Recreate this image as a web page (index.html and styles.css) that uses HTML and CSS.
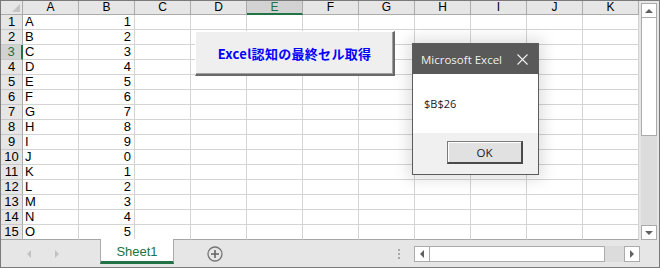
FILE: index.html
```html
<!DOCTYPE html>
<html lang="ja">
<head>
  <meta charset="UTF-8">
  <title>Excel認知の最終セル取得</title>
  <link rel="stylesheet" href="styles.css">
</head>
<body>
  <div class="window">
    <div class="main">
      <!-- Grid: filled by the script below -->
      <div class="sheet" id="sheet"></div>

      <div class="vscroll">
        <div class="sb-btn"><span class="tri up"></span></div>
        <div class="v-thumb"></div>
        <div class="v-track"></div>
        <div class="sb-btn"><span class="tri down"></span></div>
      </div>
    </div>

    <div class="tabbar">
      <div class="sheet-nav">
        <span class="nav-tri left"></span>
        <span class="nav-tri right"></span>
      </div>
      <div class="tab">Sheet1</div>
      <div class="add-sheet">
        <svg width="16" height="16" viewBox="0 0 16 16">
          <circle cx="8" cy="8" r="7" fill="none" stroke="#777" stroke-width="1.3"/>
          <path d="M8 4v8M4 8h8" stroke="#666" stroke-width="1.6"/>
        </svg>
      </div>
      <div class="spacer"></div>
      <div class="split-dots"><i></i><i></i><i></i></div>
      <div class="hscroll">
        <div class="sb-btn"><span class="tri left"></span></div>
        <div class="h-thumb"></div>
        <div class="h-track"></div>
        <div class="sb-btn"><span class="tri right"></span></div>
      </div>
    </div>

    <!-- Form button placed on the sheet -->
    <button class="macro-btn">Excel認知の最終セル取得</button>

    <!-- MsgBox -->
    <div class="dialog">
      <div class="dialog-title">
        <span>Microsoft Excel</span>
        <svg class="close" width="11" height="11" viewBox="0 0 11 11">
          <path d="M0.5 0.5l10 10M10.5 0.5l-10 10" stroke="#f2f2f2" stroke-width="1.1"/>
        </svg>
      </div>
      <div class="dialog-body">$B$26</div>
      <div class="dialog-foot">
        <button class="ok-btn">OK</button>
      </div>
    </div>
  </div>

  <script>
    // Build the sheet: header row + 15 data rows
    const cols = ['A', 'B', 'C', 'D', 'E', 'F', 'G', 'H', 'I', 'J', 'K'];
    const letters = 'ABCDEFGHIJKLMNO';
    const numbers = [1, 2, 3, 4, 5, 6, 7, 8, 9, 0, 1, 2, 3, 4, 5];
    const sheet = document.getElementById('sheet');

    let html = '<div class="row head"><div class="cell corner"><span class="corner-tri"></span></div>';
    cols.forEach(c => {
      html += '<div class="cell col-head' + (c === 'E' ? ' selected' : '') + '">' + c + '</div>';
    });
    html += '</div>';

    for (let i = 0; i < 15; i++) {
      html += '<div class="row">';
      html += '<div class="cell row-head' + (i === 2 ? ' selected' : '') + '">' + (i + 1) + '</div>';
      html += '<div class="cell">' + letters[i] + '</div>';
      html += '<div class="cell num">' + numbers[i] + '</div>';
      for (let j = 2; j < cols.length; j++) html += '<div class="cell"></div>';
      html += '</div>';
    }
    sheet.innerHTML = html;
  </script>
</body>
</html>
```

FILE: styles.css
```css
body {
  margin: 0;
  font-family: "Liberation Sans", Arial, sans-serif;
}

.window {
  position: relative;
  width: 660px;
  height: 268px;
  box-sizing: border-box;
  border: 1px solid #7a7a7a;
  background-color: #e6e6e6;
  overflow: hidden;
}

.main {
  display: flex;
  height: 239px;
}

/* Sheet grid */
.sheet {
  width: 638px;
  background-color: #fff;
}

.row {
  display: grid;
  grid-template-columns: 22px repeat(11, 56px);
  height: 15px;
}

.row.head {
  height: 14px;
}

.cell {
  box-sizing: border-box;
  border-right: 1px solid #d4d4d4;
  border-bottom: 1px solid #d4d4d4;
  font-size: 13px;
  line-height: 14px;
  padding-left: 2px;
  color: #000;
  white-space: nowrap;
  overflow: hidden;
}

.cell.num {
  text-align: right;
  padding-left: 0;
  padding-right: 3px;
}

.row:last-child .cell {
  border-bottom-color: #a6a6a6;
}

.col-head,
.row-head,
.corner {
  background-color: #e6e6e6;
  text-align: center;
  padding-left: 0;
  border-right-color: #ababab;
  border-bottom-color: #ababab;
}

.col-head {
  font-size: 12px;
  line-height: 13px;
  overflow: visible;
}

.row-head {
  border-bottom-color: #c8c8c8;
}

.col-head.selected {
  background-color: #d2d2d2;
  color: #217346;
  border-bottom: 2px solid #217346;
  line-height: 12px;
}

.row-head.selected {
  background-color: #d2d2d2;
  color: #217346;
  border-right: 2px solid #217346;
}

.corner {
  position: relative;
}

.corner-tri {
  position: absolute;
  right: 2px;
  bottom: 2px;
  width: 0;
  height: 0;
  border-left: 8px solid transparent;
  border-bottom: 8px solid #c4c4c4;
}

/* Scrollbars */
.vscroll {
  width: 20px;
  box-sizing: border-box;
  padding: 2px 2px 0 2px;
  display: flex;
  flex-direction: column;
}

.sb-btn {
  box-sizing: border-box;
  width: 16px;
  height: 15px;
  border: 1px solid #ababab;
  background-color: #fff;
  display: flex;
  align-items: center;
  justify-content: center;
  flex-shrink: 0;
}

.v-thumb {
  height: 118px;
  box-sizing: border-box;
  border: 1px solid #ababab;
  border-top: none;
  background-color: #fff;
}

.v-track,
.h-track {
  flex: 1;
  background-color: #dcdcdc;
}

.tri {
  width: 0;
  height: 0;
}

.tri.up {
  border-left: 4px solid transparent;
  border-right: 4px solid transparent;
  border-bottom: 4px solid #606060;
}

.tri.down {
  border-left: 4px solid transparent;
  border-right: 4px solid transparent;
  border-top: 4px solid #606060;
}

.tri.left {
  border-top: 4px solid transparent;
  border-bottom: 4px solid transparent;
  border-right: 4px solid #606060;
}

.tri.right {
  border-top: 4px solid transparent;
  border-bottom: 4px solid transparent;
  border-left: 4px solid #606060;
}

/* Bottom bar with sheet tabs */
.tabbar {
  display: flex;
  align-items: center;
  height: 27px;
}

.sheet-nav {
  width: 99px;
  display: flex;
  align-items: center;
  padding-left: 26px;
  box-sizing: border-box;
  gap: 24px;
}

.nav-tri {
  width: 0;
  height: 0;
  border-top: 4px solid transparent;
  border-bottom: 4px solid transparent;
}

.nav-tri.left {
  border-right: 4px solid #c2c2c2;
}

.nav-tri.right {
  border-left: 4px solid #c2c2c2;
}

.tab {
  align-self: flex-start;
  box-sizing: border-box;
  width: 74px;
  height: 25px;
  margin-top: -1px;
  background-color: #fff;
  border-left: 1px solid #ababab;
  border-right: 1px solid #ababab;
  border-bottom: 3px solid #217346;
  color: #217346;
  font-size: 13px;
  line-height: 22px;
  text-align: center;
  padding-top: 2px;
}

.add-sheet {
  margin-left: 33px;
  display: flex;
}

.spacer {
  flex: 1;
}

.split-dots {
  display: flex;
  flex-direction: column;
  gap: 2px;
  margin-right: 14px;
}

.split-dots i {
  width: 2px;
  height: 2px;
  background-color: #a8a8a8;
}

.hscroll {
  display: flex;
  width: 226px;
  height: 16px;
  margin-right: 19px;
  margin-top: 1px;
}

.hscroll .sb-btn {
  height: 16px;
}

.h-thumb {
  width: 175px;
  box-sizing: border-box;
  border: 1px solid #ababab;
  border-left: none;
  background-color: #fff;
}

/* Form button */
.macro-btn {
  position: absolute;
  left: 194px;
  top: 30px;
  width: 200px;
  height: 45px;
  box-sizing: border-box;
  background-color: #efefef;
  border-top: 1px solid #fff;
  border-left: 1px solid #fff;
  border-right: 2px solid #6a6a6a;
  border-bottom: 2px solid #6a6a6a;
  box-shadow: inset -1px -1px 0 #a0a0a0;
  color: #0000ff;
  font-family: "Noto Sans CJK JP", sans-serif;
  font-size: 13px;
  font-weight: bold;
  letter-spacing: 0.3px;
  padding: 0;
}

/* Message box */
.dialog {
  position: absolute;
  left: 411px;
  top: 42px;
  width: 127px;
  height: 132px;
  box-sizing: border-box;
  border: 1px solid #5c5c5c;
  background-color: #f0f0f0;
  box-shadow: 0 0 14px 4px rgba(0, 0, 0, 0.13);
  display: flex;
  flex-direction: column;
}

.dialog-title {
  height: 30px;
  background-color: #595959;
  color: #f0f0f0;
  font-family: "Open Sans", sans-serif;
  font-size: 11.5px;
  display: flex;
  align-items: center;
  justify-content: space-between;
  padding: 0 10px 0 8px;
}

.dialog-body {
  height: 59px;
  background-color: #fff;
  font-family: "Open Sans", sans-serif;
  font-size: 11px;
  color: #1a1a2a;
  display: flex;
  align-items: center;
  padding-left: 11px;
}

.dialog-foot {
  flex: 1;
  padding: 8px 0 0 34px;
}

.ok-btn {
  width: 76px;
  height: 23px;
  box-sizing: border-box;
  background-color: #e1e1e1;
  border: 1px solid #7a7a7a;
  border-right: 2px solid #4a4a4a;
  border-bottom: 2px solid #4a4a4a;
  box-shadow: inset 1px 1px 0 #fff;
  font-family: "Open Sans", sans-serif;
  font-size: 11.5px;
  color: #1a1a2a;
  padding: 0;
}
```
